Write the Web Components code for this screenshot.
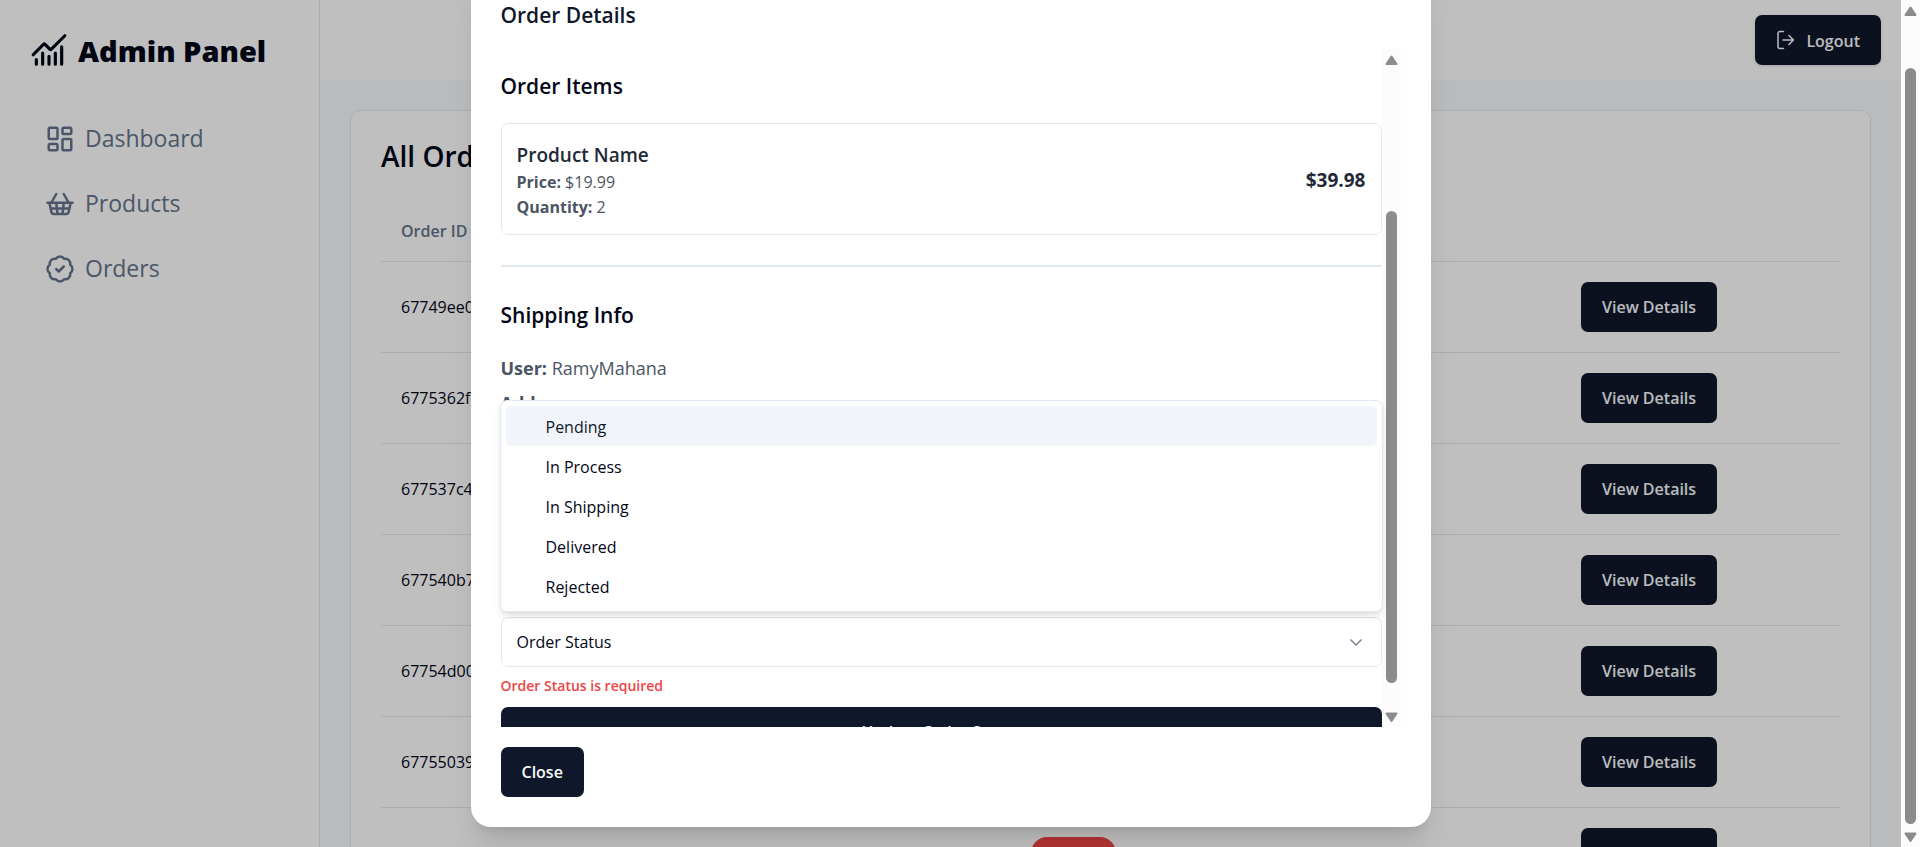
<!DOCTYPE html>
<html lang="en">
<head>
<meta charset="utf-8">
<title>Admin Panel - Orders</title>
<style>
  body {
    margin: 0;
    font-family: "Open Sans", "Noto Sans", sans-serif;
    font-size: 16px;
    line-height: 25px;
    color: #020617;
    background: #fff;
    --navy: #0f172a;
    --line: #e2e8f0;
    --muted: #64748b;
  }
</style>
</head>
<body>
<admin-page>
  <side-bar slot="sidebar">
    <nav-item icon="dashboard">Dashboard</nav-item>
    <nav-item icon="basket">Products</nav-item>
    <nav-item icon="badge">Orders</nav-item>
  </side-bar>
  <top-bar slot="header"></top-bar>
  <orders-card></orders-card>
  <order-dialog slot="dialog">
    <order-item name="Product Name" price="$19.99" quantity="2" total="$39.98"></order-item>
    <status-field slot="status"></status-field>
  </order-dialog>
</admin-page>

<script>
const ICONS = {
  chart: '<path d="M12 16v5M16 14v7M20 10v11m2-18-8.646 8.646a.5.5 0 0 1-.708 0L9.354 8.354a.5.5 0 0 0-.707 0L2 15M4 18v3M8 14v7"/>',
  dashboard: '<rect width="7" height="9" x="3" y="3" rx="1"/><rect width="7" height="5" x="14" y="3" rx="1"/><rect width="7" height="9" x="14" y="12" rx="1"/><rect width="7" height="5" x="3" y="16" rx="1"/>',
  basket: '<path d="m15 11-1 9M19 11l-4-7M2 11h20M3.5 11l1.6 7.4a2 2 0 0 0 2 1.6h9.8c.9 0 1.8-.7 2-1.6l1.7-7.4M4.5 15.5h15M5 11l4-7M9 11l1 9"/>',
  badge: '<path d="M3.85 8.62a4 4 0 0 1 4.78-4.77 4 4 0 0 1 6.74 0 4 4 0 0 1 4.78 4.78 4 4 0 0 1 0 6.74 4 4 0 0 1-4.77 4.78 4 4 0 0 1-6.75 0 4 4 0 0 1-4.78-4.77 4 4 0 0 1 0-6.76Z"/><path d="m9 12 2 2 4-4"/>'
};
const icon = (name) => `<svg viewBox="0 0 24 24" fill="none" stroke="currentColor" stroke-width="2" stroke-linecap="round" stroke-linejoin="round" aria-hidden="true">${ICONS[name]}</svg>`;

const define = (name, render) => customElements.define(name, class extends HTMLElement {
  constructor() {
    super();
    this.attachShadow({ mode: 'open' });
  }
  connectedCallback() {
    this.shadowRoot.innerHTML = render(this);
  }
});

/* Page frame: sidebar, header and content under a dimmed layer, with the page's scroll rail at the right. */
define('admin-page', () => `
  <style>
    :host { display: flex; height: 100vh; overflow: hidden; }
    .app { position: relative; flex: 1; min-width: 0; display: flex; overflow: hidden; }
    .column { flex: 1; min-width: 0; display: flex; flex-direction: column; }
    main { flex: 1; min-height: 0; padding: 30px; background: #f8fafc; }
    .overlay {
      position: absolute; inset: 0;
      display: flex; justify-content: center; align-items: flex-end;
      padding-bottom: 20px;
      background: rgba(0, 0, 0, .25);
    }
    scroll-rail { --before: 49; --thumb: 756; --after: 4; }
  </style>
  <div class="app">
    <slot name="sidebar"></slot>
    <div class="column">
      <slot name="header"></slot>
      <main><slot></slot></main>
    </div>
    <div class="overlay"><slot name="dialog"></slot></div>
  </div>
  <scroll-rail></scroll-rail>`);

define('scroll-rail', () => `
  <style>
    :host { display: flex; flex-direction: column; flex: none; width: 19px; background: #fcfcfc; }
    svg { flex: none; width: 19px; height: 19px; fill: #8b8b8b; stroke: #8b8b8b; stroke-width: 2; stroke-linejoin: round; }
    .before { flex: var(--before) 0 0; }
    .thumb { flex: var(--thumb) 0 0; width: 11px; margin: 0 4px; border-radius: 6px; background: #8b8b8b; }
    .after { flex: var(--after) 0 0; }
  </style>
  <svg viewBox="0 0 19 19" aria-hidden="true"><path d="M9.500 7.500 14.500 15h-10z"/></svg>
  <div class="before"></div>
  <div class="thumb"></div>
  <div class="after"></div>
  <svg viewBox="0 0 19 19" aria-hidden="true"><path d="M9.500 13 14.500 5.500h-10z"/></svg>`);

define('side-bar', () => `
  <style>
    :host { display: block; flex: none; box-sizing: border-box; width: 320px; padding: 30px; border-right: 1px solid var(--line); background: #fff; }
    .brand { display: flex; align-items: center; gap: 10px; height: 40px; font-size: 29px; font-weight: 800; line-height: 40px; }
    .brand span { padding-top: 2px; }
    .brand svg { flex: none; width: 38px; height: 38px; }
    nav { display: flex; flex-direction: column; gap: 20px; margin-top: 46px; }
  </style>
  <div class="brand">${icon('chart')}<span>Admin Panel</span></div>
  <nav><slot></slot></nav>`);

define('nav-item', (el) => `
  <style>
    :host { display: block; }
    a { display: flex; align-items: center; gap: 10px; height: 45px; padding: 0 15px; color: var(--muted); font-size: 23px; line-height: 35px; text-decoration: none; }
    svg { flex: none; width: 30px; height: 30px; }
  </style>
  <a href="#">${icon(el.getAttribute('icon'))}<slot></slot></a>`);

define('app-button', () => `
  <style>
    :host { display: inline-block; vertical-align: top; }
    button {
      display: flex; align-items: center; justify-content: center; gap: 10px;
      width: 100%; height: 50px; padding: 0 21px;
      border: 0; border-radius: 7px; background: var(--navy); color: #f8fafc;
      font: inherit; font-weight: 600; white-space: nowrap; cursor: pointer;
    }
  </style>
  <button type="button"><slot></slot></button>`);

define('top-bar', () => `
  <style>
    :host { display: flex; flex: none; justify-content: flex-end; align-items: center; height: 80px; padding: 0 20px; background: #fff; }
    svg { flex: none; width: 20px; height: 20px; }
    span { padding-top: 2px; }
    app-button { border-radius: 7px; box-shadow: 0 1px 3px rgba(0, 0, 0, .15); }
  </style>
  <app-button>
    <svg viewBox="0 0 20 20" fill="none" stroke="currentColor" stroke-width="1.5" stroke-linecap="round" stroke-linejoin="round" aria-hidden="true"><path d="M7.500 1.500H4a2 2 0 0 0-2 2v13a2 2 0 0 0 2 2h3.500M7 10h10.500M13 5.500l4.500 4.500-4.500 4.500"/></svg>
    <span>Logout</span>
  </app-button>`);

const ORDERS = ['67749ee0', '6775362f', '677537c4', '677540b7', '67754d00', '67755039'];
define('orders-card', () => `
  <style>
    :host { display: block; padding: 30px; border: 1px solid var(--line); border-radius: 10px; background: #fff; }
    h1 { margin: 0 0 30px; font-size: 28px; font-weight: 600; line-height: 30px; }
    table { width: 100%; table-layout: fixed; border-collapse: separate; border-spacing: 0; }
    .id { width: 630px; }
    .action { width: 279px; }
    th, td { box-sizing: border-box; padding: 0 20px; border-bottom: 1px solid var(--line); text-align: left; }
    th { height: 61px; color: var(--muted); font-weight: 600; }
    td { height: 91px; }
    .pill { display: inline-block; width: 85px; height: 32px; border-radius: 16px; background: #ef4444; vertical-align: middle; }
  </style>
  <h1>All Orders</h1>
  <table>
    <colgroup><col class="id"><col><col class="action"></colgroup>
    <thead><tr><th scope="col">Order ID</th><th></th><th></th></tr></thead>
    <tbody>
      ${ORDERS.map((id) => `<tr><td>${id}</td><td></td><td><app-button>View Details</app-button></td></tr>`).join('')}
      <tr><td>6775573db0e4a2c91e7a2b4c</td><td><span class="pill"></span></td><td><app-button>View Details</app-button></td></tr>
    </tbody>
  </table>`);

define('order-dialog', () => `
  <style>
    :host { display: block; flex: none; box-sizing: border-box; width: 960px; max-width: 100%; padding: 30px; border-radius: 20px; background: #fff;
      box-shadow: 0 25px 31px -6px rgba(0, 0, 0, .1), 0 10px 12px -7px rgba(0, 0, 0, .1); }
    h2, h3 { margin: 0; font-size: 21px; font-weight: 600; }
    h2 { line-height: 32px; color: var(--navy); }
    h3 { line-height: 37px; }
    .scroller { display: flex; height: 80vh; margin: 18px 0 20px; }
    .content { flex: 1; min-width: 0; padding-top: 19px; box-sizing: border-box; overflow-x: visible; overflow-y: clip; }
    scroll-rail { --before: 143; --thumb: 472; --after: 25; }
    .items { margin-top: 18px; }
    hr { margin: 30px 0; border: 0; height: 2px; background: var(--line); }
    .info { display: flex; flex-direction: column; gap: 5px; min-height: 264px; margin-top: 19px; color: #4b5563; font-size: 18px; line-height: 30px; }
    p { margin: 0; }
    form { display: block; }
    form app-button { display: block; }
  </style>
  <h2>Order Details</h2>
  <div class="scroller">
    <div class="content">
      <h3>Order Items</h3>
      <div class="items"><slot></slot></div>
      <hr>
      <h3>Shipping Info</h3>
      <div class="info">
        <p><b>User:</b> RamyMahana</p>
        <p><b>Address:</b></p>
      </div>
      <form>
        <slot name="status"></slot>
        <app-button>Update Order Status</app-button>
      </form>
    </div>
    <scroll-rail></scroll-rail>
  </div>
  <app-button>Close</app-button>`);

define('order-item', (el) => `
  <style>
    :host { display: flex; justify-content: space-between; align-items: center; padding: 16px 15px 14px; border: 1px solid var(--line); border-radius: 7px; color: #4b5563; }
    h4, p { margin: 0; }
    h4 { font-size: 19px; font-weight: 600; line-height: 30px; color: #1f2937; }
    .total { font-size: 19px; font-weight: 700; color: #1f2937; }
  </style>
  <div>
    <h4>${el.getAttribute('name')}</h4>
    <p><b>Price:</b> ${el.getAttribute('price')}</p>
    <p><b>Quantity:</b> ${el.getAttribute('quantity')}</p>
  </div>
  <span class="total">${el.getAttribute('total')}</span>`);

/* Order status picker, with its list open above the control. */
define('status-field', () => `
  <style>
    :host { display: block; color: #020617; }
    .control { position: relative; }
    select {
      display: block; box-sizing: border-box; width: 100%; height: 50px; padding: 0 15px;
      appearance: none; border: 1px solid var(--line); border-radius: 7px; background: #fff;
      color: inherit; font: inherit;
    }
    .chevron { position: absolute; right: 16px; top: 15px; width: 20px; height: 20px; pointer-events: none; color: #808390; }
    ul {
      position: absolute; left: -1px; right: -1px; bottom: 100%;
      margin: 0 0 5px; padding: 5px; list-style: none;
      border: 1px solid var(--line); border-radius: 7px; background: #fff;
      box-shadow: 0 5px 8px -1px rgba(0, 0, 0, .1), 0 3px 5px -3px rgba(0, 0, 0, .1);
    }
    li { height: 40px; padding-left: 40px; border-radius: 5px; line-height: 42px; }
    li[aria-selected="true"] { background: #f1f5f9; color: #0f172a; }
    p { margin: 6px 0 9px; color: #ef4444; font-size: 14px; font-weight: 600; line-height: 25px; }
  </style>
  <div class="control">
    <select aria-label="Order Status" aria-invalid="true" aria-describedby="error"><option>Order Status</option></select>
    <svg class="chevron" viewBox="0 0 20 20" fill="none" stroke="currentColor" stroke-width="1.5" aria-hidden="true"><path d="m4.500 7.500 5.500 5.500 5.500-5.500"/></svg>
    <ul role="listbox" aria-label="Order Status">
      <li role="option" aria-selected="true">Pending</li>
      <li role="option">In Process</li>
      <li role="option">In Shipping</li>
      <li role="option">Delivered</li>
      <li role="option">Rejected</li>
    </ul>
  </div>
  <p id="error">Order Status is required</p>`);
</script>
</body>
</html>
